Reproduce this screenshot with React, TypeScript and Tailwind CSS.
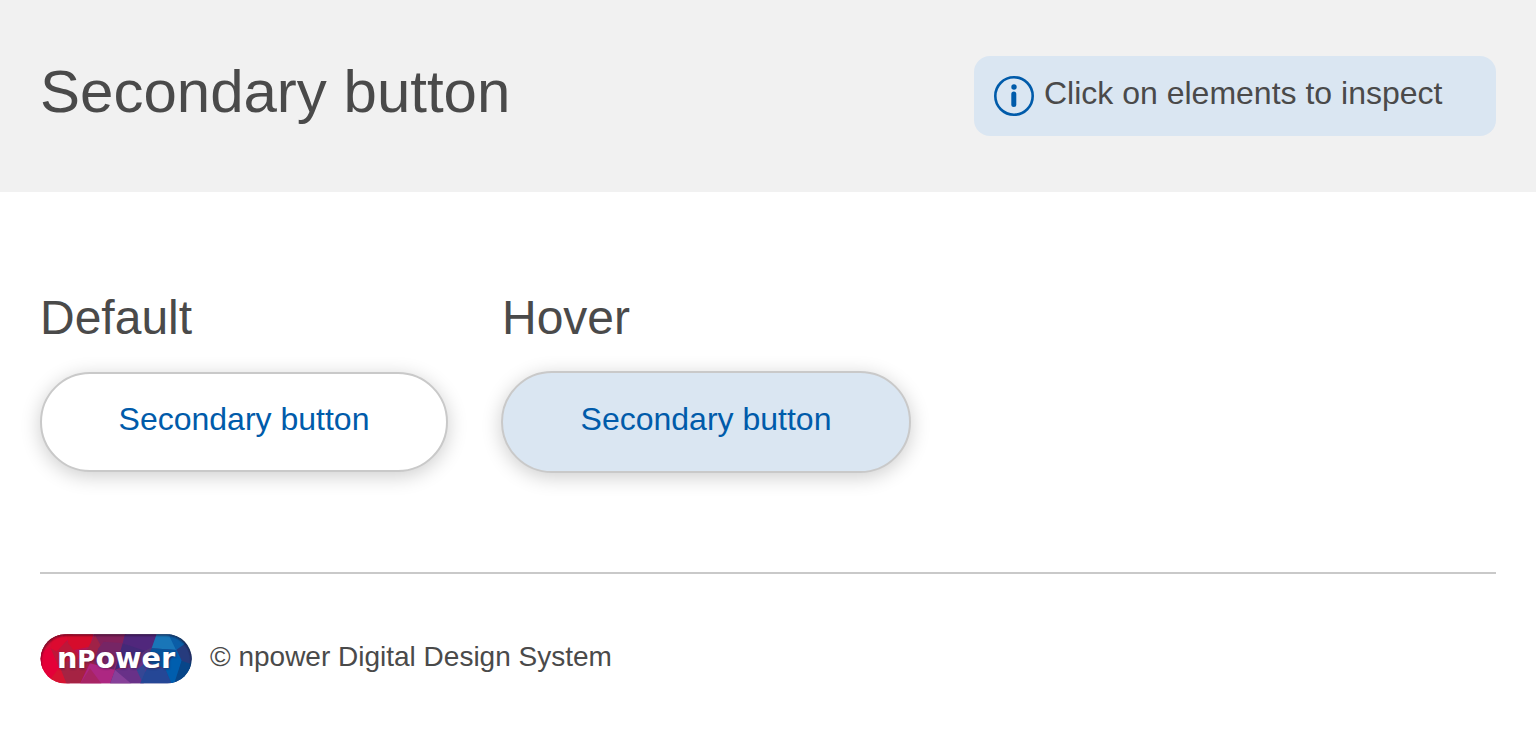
import React from 'react';

function InfoIcon() {
  return (
    <svg className="mt-5 size-10 shrink-0" viewBox="0 0 40 40" fill="none" aria-hidden="true">
      <circle cx="20" cy="20" r="18.7" stroke="#005baa" strokeWidth="2.6" />
      <circle cx="20" cy="11" r="2.7" fill="#005baa" />
      <path d="M19.8 18V28.5" stroke="#005baa" strokeWidth="5" strokeLinecap="round" />
    </svg>
  );
}

const facets: [string, string][] = [
  ['30,42 90,42 60,95 30,150', '#d40f36'],
  ['30,100 60,80 90,145 60,192 30,192', '#e40038'],
  ['70,42 130,42 80,95 62,85', '#dc0a30'],
  ['62,85 80,95 110,62 150,110 90,150', '#bd1739'],
  ['110,42 190,42 180,80 130,90 115,70', '#d60c2c'],
  ['90,140 120,192 50,192', '#d71331'],
  ['85,130 185,110 150,192 110,192', '#a52343'],
  ['190,42 290,42 275,75 220,65 205,85', '#83215b'],
  ['160,110 195,45 225,100 190,150', '#a02247'],
  ['205,85 220,65 285,70 250,150 190,130', '#762565'],
  ['180,130 255,150 240,192 150,192', '#ad2782'],
  ['180,145 215,192 150,192', '#a82464'],
  ['285,42 380,42 365,82 340,95 278,70', '#50277c'],
  ['278,70 345,92 300,130 255,150', '#432978'],
  ['255,150 320,140 370,90 340,192 240,192', '#683188'],
  ['255,150 305,192 240,192', '#864099'],
  ['320,150 350,125 340,192', '#354795'],
  ['380,42 420,42 440,90 365,85', '#1976b8'],
  ['365,85 440,90 405,145 350,125', '#07539b'],
  ['350,145 405,145 425,192 330,192', '#254796'],
  ['415,42 445,42 465,72 438,90', '#0b5da6'],
  ['440,90 465,72 490,110 475,140 455,122', '#263b7d'],
  ['405,145 440,90 455,122 435,192 425,192', '#005eae'],
  ['455,122 490,135 460,192 432,192', '#074689'],
];

function NpowerLogo() {
  return (
    <svg className="h-[50px] w-[152px] shrink-0" viewBox="30 42 456 150" role="img" aria-label="npower">
      <defs>
        <clipPath id="logo-pill">
          <rect x="32" y="43" width="453" height="147" rx="73.5" />
        </clipPath>
        <linearGradient id="logo-base" x1="0" x2="1">
          <stop offset="0" stopColor="#e40038" />
          <stop offset="0.5" stopColor="#8d256c" />
          <stop offset="1" stopColor="#074689" />
        </linearGradient>
        <filter id="logo-edge" x="-10%" y="-10%" width="120%" height="130%">
          <feGaussianBlur stdDeviation="3" />
        </filter>
      </defs>
      <g clipPath="url(#logo-pill)">
        <rect x="30" y="42" width="456" height="150" fill="url(#logo-base)" />
        {facets.map(([points, fill]) => (
          <polygon key={points} points={points} fill={fill} />
        ))}
        <rect x="29" y="42" width="459" height="170" rx="80" fill="none" stroke="#201020" strokeOpacity="0.75" strokeWidth="7" filter="url(#logo-edge)" />
      </g>
      <g fontFamily="DejaVu Sans, sans-serif" fontSize="86" fontWeight="700" textAnchor="middle">
        <text x="260" y="146" fill="#2a1038" opacity="0.5" aria-hidden="true" filter="url(#logo-edge)">
          n<tspan fontSize="74">P</tspan>ower
        </text>
        <text x="258" y="143" fill="#ffffff">
          n<tspan fontSize="74">P</tspan>ower
        </text>
      </g>
    </svg>
  );
}

export default function App() {
  return (
    <div className="bg-white font-['Liberation_Sans',Arial,sans-serif] text-[#4a4a4a]">
      <header className="flex items-start justify-between bg-[#f1f1f1] px-10 py-14">
        <h1 className="text-[60px] leading-[72px]">Secondary button</h1>
        <div className="flex h-20 w-[522px] items-start gap-2.5 rounded-2xl bg-[#dae6f2] pl-5">
          <InfoIcon />
          <p className="pt-[17px] text-[32px] leading-10">Click on elements to inspect</p>
        </div>
      </header>

      <main className="mx-10 flex gap-[54px] border-b-2 border-[#c9c9c9] pt-[98px] pb-[100px]">
        <section>
          <h2 className="mb-[26px] text-[48px] leading-14">Default</h2>
          <button
            type="button"
            className="block h-[100px] w-[408px] cursor-pointer rounded-full border-2 border-[#c9c9c9] bg-white pb-1.5 text-[32px] leading-10 text-[#005baa] shadow-[0_4px_20px_rgba(0,0,0,0.2)]"
          >
            Secondary button
          </button>
        </section>
        <section>
          <h2 className="mb-[26px] text-[48px] leading-14">Hover</h2>
          <button
            type="button"
            className="-m-px block h-[102px] w-[410px] cursor-pointer rounded-full border-2 border-[#c9c9c9] bg-[#dae6f2] pb-1.5 text-[32px] leading-10 text-[#005baa] shadow-[0_4px_20px_rgba(0,0,0,0.2)]"
          >
            Secondary button
          </button>
        </section>
      </main>

      <footer className="mx-10 flex items-start gap-[18px] py-[60px]">
        <NpowerLogo />
        <p className="pt-[3px] text-[28px] leading-10">© npower Digital Design System</p>
      </footer>
    </div>
  );
}
